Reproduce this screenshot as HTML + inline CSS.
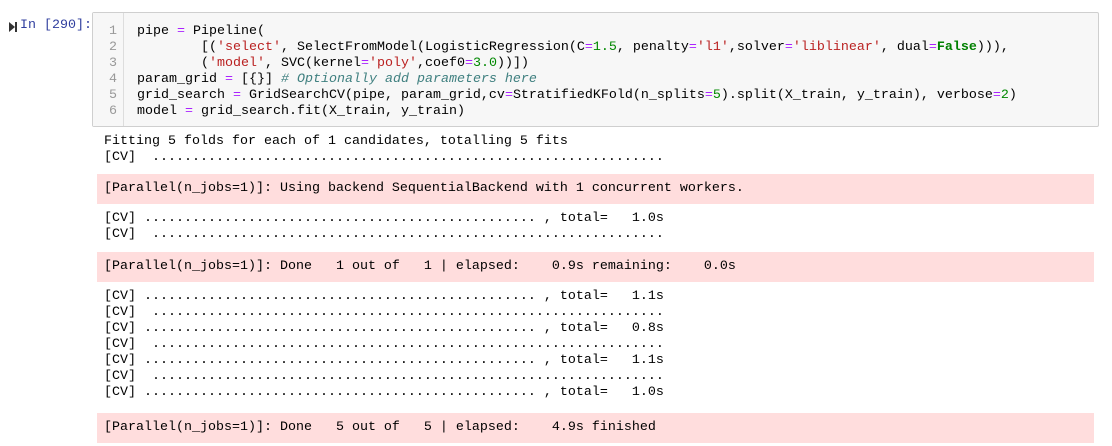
<!DOCTYPE html>
<html><head><style>
body{margin:0;background:#fff;width:1112px;height:446px;overflow:hidden;position:relative;font-family:"Liberation Mono",monospace;font-size:13.33px;color:#000}
.p{position:absolute;white-space:pre;line-height:16px}
.prompt{position:absolute;left:20px;top:18px;color:#303f9f;white-space:pre;line-height:16px}
.icon{position:absolute;left:9px;top:22px;width:0;height:0;border-top:5px solid transparent;border-bottom:5px solid transparent;border-left:6px solid #333}
.icon2{position:absolute;left:15px;top:22px;width:2px;height:10px;background:#333}
.box{position:absolute;left:92px;top:12px;width:1005px;height:113px;background:#f7f7f7;border:1px solid #cfcfcf;border-radius:2px}
.gut{position:absolute;left:0;top:0;width:30px;height:113px;border-right:1px solid #ddd;background:#f7f7f7}
.ln{position:absolute;right:6px;color:#999;line-height:16px;text-align:right}
.k{color:#008000;font-weight:bold}.s{color:#ba2121}.o{color:#aa22ff}.n{color:#080}.c{color:#408080;font-style:italic}
.pink{position:absolute;left:97px;width:997px;background:#fdd}
</style></head><body>
<div class="icon"></div><div class="icon2"></div>
<div class="prompt">In [290]:</div>
<div class="box"><div class="gut">
<div class="ln" style="top:11px">1</div><div class="ln" style="top:27px">2</div><div class="ln" style="top:43px">3</div><div class="ln" style="top:59px">4</div><div class="ln" style="top:75px">5</div><div class="ln" style="top:91px">6</div></div></div>
<div class="p" style="left:137px;top:24px">pipe <span class="o">=</span> Pipeline(
        [(<span class="s">'select'</span>, SelectFromModel(LogisticRegression(C<span class="o">=</span><span class="n">1.5</span>, penalty<span class="o">=</span><span class="s">'l1'</span>,solver<span class="o">=</span><span class="s">'liblinear'</span>, dual<span class="o">=</span><span class="k">False</span>))),
        (<span class="s">'model'</span>, SVC(kernel<span class="o">=</span><span class="s">'poly'</span>,coef0<span class="o">=</span><span class="n">3.0</span>))])
param_grid <span class="o">=</span> [{}] <span class="c"># Optionally add parameters here</span>
grid_search <span class="o">=</span> GridSearchCV(pipe, param_grid,cv<span class="o">=</span>StratifiedKFold(n_splits<span class="o">=</span><span class="n">5</span>).split(X_train, y_train), verbose<span class="o">=</span><span class="n">2</span>)
model <span class="o">=</span> grid_search.fit(X_train, y_train)</div>
<div class="pink" style="top:174px;height:30px"></div>
<div class="pink" style="top:252px;height:30px"></div>
<div class="pink" style="top:413px;height:30px"></div>
<div class="p" style="left:104px;top:134px">Fitting 5 folds for each of 1 candidates, totalling 5 fits
[CV]  ................................................................</div>
<div class="p" style="left:104px;top:181px">[Parallel(n_jobs=1)]: Using backend SequentialBackend with 1 concurrent workers.</div>
<div class="p" style="left:104px;top:211px">[CV] ................................................. , total=   1.0s
[CV]  ................................................................</div>
<div class="p" style="left:104px;top:259px">[Parallel(n_jobs=1)]: Done   1 out of   1 | elapsed:    0.9s remaining:    0.0s</div>
<div class="p" style="left:104px;top:289px">[CV] ................................................. , total=   1.1s
[CV]  ................................................................
[CV] ................................................. , total=   0.8s
[CV]  ................................................................
[CV] ................................................. , total=   1.1s
[CV]  ................................................................
[CV] ................................................. , total=   1.0s</div>
<div class="p" style="left:104px;top:420px">[Parallel(n_jobs=1)]: Done   5 out of   5 | elapsed:    4.9s finished</div>
</body></html>
